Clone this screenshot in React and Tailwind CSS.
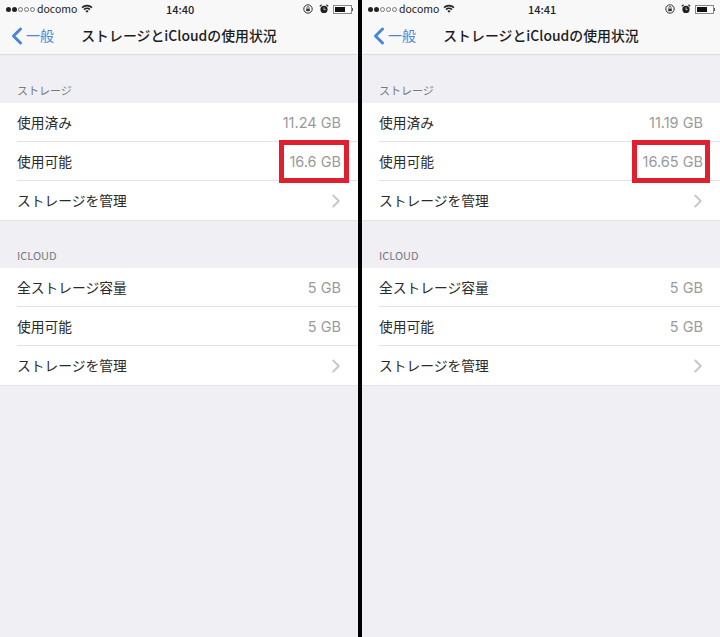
import { ChevronLeft, ChevronRight } from "lucide-react";

const font = { fontFamily: '"Noto Sans CJK JP", Inter, sans-serif' };

function Wifi() {
  return (
    <svg width="12" height="9" viewBox="0 0 12 9" className="ml-[4px] mb-[2px]">
      <path d="M0.5 3 A8 8 0 0 1 11.5 3 L10.4 4.2 A6.4 6.4 0 0 0 1.6 4.2 Z" fill="#222" />
      <path d="M2.5 5 A5 5 0 0 1 9.5 5 L8.4 6.2 A3.4 3.4 0 0 0 3.6 6.2 Z" fill="#222" />
      <path d="M4.4 7 A2.4 2.4 0 0 1 7.6 7 L6 8.8 Z" fill="#222" />
    </svg>
  );
}

function StatusBar({ time }) {
  return (
    <div className="relative flex h-[18px] items-center justify-between pl-[6px] pr-[5px] text-[10.5px] text-[#222]">
      <div className="flex items-center">
        <div className="flex items-center gap-[1px]">
          <span className="h-[5px] w-[5px] rounded-full bg-[#222]" />
          <span className="h-[5px] w-[5px] rounded-full bg-[#222]" />
          <span className="h-[5px] w-[5px] rounded-full border border-[#777]" />
          <span className="h-[5px] w-[5px] rounded-full border border-[#777]" />
          <span className="h-[5px] w-[5px] rounded-full border border-[#777]" />
        </div>
        <span className="ml-[2px] leading-none">docomo</span>
        <Wifi />
      </div>
      <span className="absolute left-[166px] text-[11px] font-medium leading-none">{time}</span>
      <div className="flex items-center">
        <svg width="10" height="10" viewBox="0 0 10 10" className="mr-[6px]">
          <circle cx="5" cy="5" r="4.2" fill="none" stroke="#333" strokeWidth="1" />
          <rect x="3.2" y="4.6" width="3.6" height="2.6" fill="#333" />
          <path d="M3.9 4.6 V3.6 A1.1 1.1 0 0 1 6.1 3.6 V4.6" fill="none" stroke="#333" strokeWidth="0.7" />
        </svg>
        <svg width="10" height="10" viewBox="0 0 10 10" className="mr-[4px]">
          <circle cx="5" cy="5.4" r="3.6" fill="#222" />
          <path d="M0.8 2.4 L2.6 0.8 M9.2 2.4 L7.4 0.8" stroke="#222" strokeWidth="1.2" />
          <path d="M5 3.4 V5.6 H6.6" stroke="#fff" strokeWidth="0.7" fill="none" />
        </svg>
        <div className="flex items-center">
          <div className="h-[9px] w-[19px] border border-[#888] bg-white p-[1px]">
            <div className="h-full w-[10px] bg-[#111]" />
          </div>
          <div className="h-[3px] w-[1px] bg-[#555]" />
        </div>
      </div>
    </div>
  );
}

function Row({ label, value, arrow, last }) {
  return (
    <div className="flex h-[39px] pl-[17px]">
      <div className={`flex flex-1 items-center justify-between pr-[17px] ${last ? "" : "border-b border-[#e3e3e6]"}`}>
        <span className="text-[13.75px] text-[#2a2a2a]">{label}</span>
        {value && <span className="pt-[2px] text-[14.5px] text-[#9a9a9e]" style={{ fontFamily: "Inter, sans-serif" }}>{value}</span>}
        {arrow && <ChevronRight className="mr-[-6px] h-[22px] w-[22px] text-[#c8c8cc]" strokeWidth={2.2} />}
      </div>
    </div>
  );
}

function Section({ title, rows, topGap }) {
  return (
    <div>
      <div className={`flex items-end pl-[17px] text-[11px] text-[#77777c] ${topGap}`}>{title}</div>
      <div className="border-b border-[#e4e4e7] bg-white">
        {rows.map((r, i) => (
          <Row key={i} {...r} last={i === rows.length - 1} />
        ))}
      </div>
    </div>
  );
}

function Phone({ time, used, free, boxClass }) {
  return (
    <div className="relative h-full w-[358px] bg-[#efeff4]" style={font}>
      <div className="h-[55px] border-b border-[#dcdcdf] bg-[#f8f8f9]">
        <StatusBar time={time} />
        <div className="relative flex h-[35px] items-center justify-center">
          <div className="absolute left-[3px] flex items-center text-[#4a86d8]">
            <ChevronLeft className="h-[28px] w-[28px]" strokeWidth={2.6} />
            <span className="ml-[-5px] text-[14px]">一般</span>
          </div>
          <span className="text-[13.9px] font-medium text-[#1c1c1c]">ストレージとiCloudの使用状況</span>
        </div>
      </div>
      <Section
        title="ストレージ"
        topGap="h-[48px] pb-[5px]"
        rows={[
          { label: "使用済み", value: used },
          { label: "使用可能", value: free },
          { label: "ストレージを管理", arrow: true },
        ]}
      />
      <Section
        title="ICLOUD"
        topGap="h-[47px] pb-[5px]"
        rows={[
          { label: "全ストレージ容量", value: "5 GB" },
          { label: "使用可能", value: "5 GB" },
          { label: "ストレージを管理", arrow: true },
        ]}
      />
      <div className={`absolute top-[140px] h-[43px] border-[5px] border-[#e0202e] ${boxClass}`} />
    </div>
  );
}

export default function App() {
  return (
    <div className="flex h-[637px] w-[720px] bg-black">
      <Phone time="14:40" used="11.24 GB" free="16.6 GB" boxClass="left-[279px] w-[70px]" />
      <div className="w-[4px]" />
      <Phone time="14:41" used="11.19 GB" free="16.65 GB" boxClass="left-[270px] w-[78px]" />
    </div>
  );
}
